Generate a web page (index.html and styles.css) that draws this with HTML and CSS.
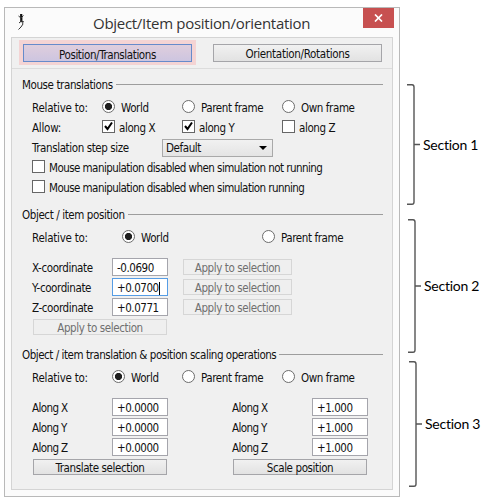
FILE: index.html
```html
<!DOCTYPE html>
<html lang="en">
<head>
<meta charset="utf-8">
<title>Object/Item position/orientation</title>
<link rel="stylesheet" href="styles.css">
</head>
<body>
<main class="page">
  <section class="window">
    <header class="titlebar">
      <svg class="logo" width="8" height="16" viewBox="0 0 8 16"><path d="M3.200 0V3M3.300 2V8" fill="none" stroke="#111" stroke-width="2.2"/><path d="M.5 2 3 4 5.500 1.500M1 9 3.500 7 6 8M3.500 7 5 10 3 13 .5 15.500" fill="none" stroke="#333" stroke-width="1"/></svg>
      <h1 class="title">Object/Item position/orientation</h1>
      <button class="close" aria-label="Close"><svg width="9" height="8" viewBox="0 0 9 8"><path d="M1 .5 8 7.500M8 .5 1 7.500" stroke="#fff" stroke-width="1.7"/></svg></button>
    </header>
    <div class="panel">
      <nav class="tabs">
        <div class="tab-mark"><button class="btn tab active">Position/Translations</button></div>
        <button class="btn tab">Orientation/Rotations</button>
      </nav>

      <section class="group mouse">
        <h2 class="legend"><span>Mouse translations</span></h2>
        <div class="row cols-a">
          <span class="rel">Relative to:</span>
          <label class="opt"><i class="radio on"></i>World</label>
          <label class="opt"><i class="radio"></i>Parent frame</label>
          <label class="opt"><i class="radio"></i>Own frame</label>
        </div>
        <div class="row cols-a">
          <span class="rel">Allow:</span>
          <label class="opt tight"><i class="check"><svg width="11" height="11" viewBox="0 0 11 11"><path d="M2 5 4.500 8 9 1.500" fill="none" stroke="#000" stroke-width="2"/></svg></i>along X</label>
          <label class="opt tight"><i class="check"><svg width="11" height="11" viewBox="0 0 11 11"><path d="M2 5 4.500 8 9 1.500" fill="none" stroke="#000" stroke-width="2"/></svg></i>along Y</label>
          <label class="opt tight"><i class="check"></i>along Z</label>
        </div>
        <div class="row step"><span>Translation step size</span><div class="select"><span>Default</span><i class="arrow"></i></div></div>
        <label class="row opt wide"><i class="check"></i>Mouse manipulation disabled when simulation not running</label>
        <label class="row opt wide"><i class="check"></i>Mouse manipulation disabled when simulation running</label>
      </section>

      <section class="group position">
        <h2 class="legend"><span>Object / item position</span></h2>
        <div class="row cols-b">
          <span class="rel">Relative to:</span>
          <label class="opt"><i class="radio on"></i>World</label>
          <label class="opt"><i class="radio"></i>Parent frame</label>
        </div>
        <div class="fields">
          <div class="row field"><span>X-coordinate</span><div class="input">-0.0690</div><button class="btn small off">Apply to selection</button></div>
          <div class="row field"><span>Y-coordinate</span><div class="input focus">+0.0700<i class="caret"></i></div><button class="btn small off">Apply to selection</button></div>
          <div class="row field"><span>Z-coordinate</span><div class="input">+0.0771</div><button class="btn small off">Apply to selection</button></div>
          <button class="btn action off">Apply to selection</button>
        </div>
      </section>

      <section class="group scaling">
        <h2 class="legend"><span>Object / item translation &amp; position scaling operations</span></h2>
        <div class="row cols-c">
          <span class="rel">Relative to:</span>
          <label class="opt"><i class="radio on"></i>World</label>
          <label class="opt"><i class="radio"></i>Parent frame</label>
          <label class="opt"><i class="radio"></i>Own frame</label>
        </div>
        <div class="pair">
          <div class="fields">
            <div class="row field axis"><span>Along X</span><div class="input">+0.0000</div></div>
            <div class="row field axis"><span>Along Y</span><div class="input">+0.0000</div></div>
            <div class="row field axis"><span>Along Z</span><div class="input">+0.0000</div></div>
            <button class="btn action">Translate selection</button>
          </div>
          <div class="fields">
            <div class="row field axis"><span>Along X</span><div class="input">+1.000</div></div>
            <div class="row field axis"><span>Along Y</span><div class="input">+1.000</div></div>
            <div class="row field axis"><span>Along Z</span><div class="input">+1.000</div></div>
            <button class="btn action">Scale position</button>
          </div>
        </div>
      </section>
    </div>
  </section>

  <aside class="notes">
    <div class="note first"><svg width="14" height="121" viewBox="0 0 14 121"><path d="M0 .7H5Q7 .7 7 3V118Q7 120.300 5 120.300H0M7 60.500H13" /></svg><span>Section 1</span></div>
    <div class="note second"><svg width="14" height="134" viewBox="0 0 14 134"><path d="M0 .7H5Q7 .7 7 3V131Q7 133.300 5 133.300H0M7 67H13" /></svg><span>Section 2</span></div>
    <div class="note third"><svg width="14" height="126" viewBox="0 0 14 126"><path d="M0 .7H5Q7 .7 7 3V123Q7 125.300 5 125.300H0M7 63H13" /></svg><span>Section 3</span></div>
  </aside>
</main>
</body>
</html>
```
FILE: styles.css
```css
* { box-sizing: border-box; }
body {
  margin: 0;
  background: #fff;
  color: #111;
  font: 11.5px/20px "DejaVu Sans Condensed", "DejaVu Sans", sans-serif;
  font-stretch: condensed;
  letter-spacing: -0.4px;
  white-space: nowrap;
}
.page { display: flex; width: 483px; height: 501px; padding: 7px 0 0 4px; }
h1, h2 { margin: 0; font-weight: normal; }
i { display: block; flex: none; }
svg { display: block; flex: none; }

.window { width: 396px; height: 490px; border: 1px solid #b9b9b9; background: #fbfbfb; padding: 0 6px; }
.titlebar { display: flex; height: 29px; }
.logo { margin: 6px 0 0 7px; }
.title { margin: 4px 0 0 67px; width: 218px; font: 15px/22px "Open Sans", sans-serif; color: #333; letter-spacing: -0.29px; }
.close { margin-left: auto; margin-right: -1px; width: 31px; height: 20px; border: 0; padding: 0; background: #c75050; display: grid; place-items: center; }

.panel { height: 453px; border: 1px solid #d4d4d4; background: #f0f0f0; }
.tabs { display: flex; height: 31px; padding: 2px 0 0 7px; border-bottom: 1px solid #dcdcdc; }
.tab-mark { width: 177px; height: 25px; padding: 4px; background: #f4d4d4; margin-right: 17px; }
.btn { display: block; border: 1px solid #a5a5a9; background: linear-gradient(#f1f1f1, #e2e2e2); color: #111; font: inherit; letter-spacing: inherit; padding: 0; text-align: center; line-height: 16px; }
.tab { width: 169px; height: 18px; line-height: 19px; }
.tabs > .tab { margin-top: 4px; letter-spacing: -0.3px; }
.tab.active { border-color: #668bcb; background: linear-gradient(#dfcedd, #cdc5e0); line-height: 20px; }
.btn.off { color: #707070; border-color: #d6d6d6; background: #efefef; }

.group { padding-left: 10px; }
.mouse { height: 130px; padding-top: 6px; }
.position { height: 140px; padding-top: 6px; }
.scaling { padding-top: 6px; }
.legend { display: flex; align-items: center; gap: 3px; height: 20px; margin: 0 9px 3px 0; font-size: inherit; }
.legend::after { content: ""; flex: 1; height: 1px; background: #9d9d9d; margin-top: -1px; }
.scaling .legend { letter-spacing: -0.46px; }
.row { height: 20px; margin-left: 10px; align-items: center; }
.rel { letter-spacing: -0.25px; }
.cols-a { display: grid; grid-template-columns: 70px 80px 100px 90px; }
.cols-b { display: grid; grid-template-columns: 90px 140px 100px; }
.cols-c { display: grid; grid-template-columns: 80px 70px 100px 90px; }
.opt { display: flex; align-items: center; gap: 6px; }
.opt.tight { gap: 4px; }
.opt.wide { gap: 4px; letter-spacing: -0.55px; }
.radio { width: 13px; height: 13px; margin-top: -3px; border: 1px solid #6c6c6c; border-radius: 50%; background: #fff; }
.radio.on { background: radial-gradient(circle, #202020 0 3.2px, #fff 4px); }
.check { width: 13px; height: 13px; margin-top: -3px; border: 1px solid #666; background: #fff; }
.step { display: grid; grid-template-columns: 130px 111px; }
.select { display: flex; align-items: center; justify-content: space-between; height: 18px; margin-top: -1px; padding: 1px 5px 0 3px; border: 1px solid #a9a9a9; background: linear-gradient(#f1f1f1, #e4e4e4); }
.arrow { border: 4px solid transparent; border-top: 4px solid #000; border-bottom: 0; }

.fields { padding-top: 10px; }
.field { display: grid; grid-template-columns: 80px 56px 110px; }
.axis > span { letter-spacing: -0.6px; }
.input { display: flex; align-items: center; height: 18px; margin-top: -2px; padding: 2px 0 0 4px; border: 1px solid #a5a5ac; background: #fff; letter-spacing: -0.45px; }
.input.focus { border-color: #569de5; }
.caret { width: 1px; height: 13px; background: #000; }
.small { width: 109px; height: 16px; margin: -2px 0 0 15px; }
.action { width: 134px; height: 16px; margin: 1px 0 0 11px; }
.pair { display: grid; grid-template-columns: 200px 160px; }

.notes { width: 76px; margin-left: 7px; font: 14px/20px Lato, sans-serif; letter-spacing: -0.25px; color: #000; }
.note { display: flex; align-items: center; gap: 2px; }
.note path { fill: none; stroke: #555; stroke-width: 1.4; }
.first { margin-top: 77px; }
.second { margin: 14px 0 0 1px; }
.third { margin: 8px 0 0 2px; }
```
